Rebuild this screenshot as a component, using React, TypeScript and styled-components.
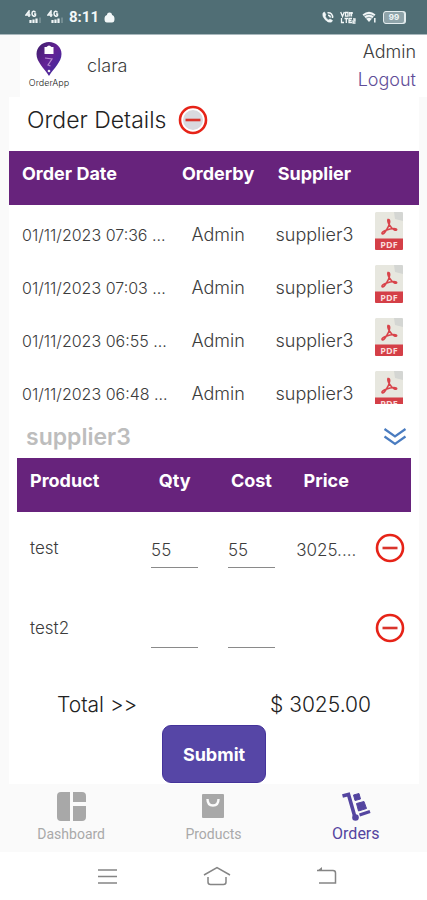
import React, { useState } from "react";
import styled, { createGlobalStyle } from "styled-components";

const GlobalStyle = createGlobalStyle`
  * { box-sizing: border-box; }
  body {
    margin: 0;
    background: #fafafa;
    color: #3c3c3c;
    font-family: Inter, "Open Sans", sans-serif;
    font-size: 17px;
    font-weight: 300;
  }
  button, input { font: inherit; color: inherit; }
`;

const Screen = styled.div`
  display: flex;
  flex-direction: column;
  min-height: 100vh;
`;

const StatusBar = styled.div`
  display: flex;
  align-items: center;
  justify-content: space-between;
  height: 35px;
  padding: 0 22px 0 25px;
  background: #506e75;
  border-bottom: 1px solid #a9b8bd;
  color: #f2f7f8;
`;

const StatusGroup = styled.div<{ $gap: number }>`
  display: flex;
  align-items: center;
  gap: ${(p) => p.$gap}px;
`;

const Clock = styled.span`
  font-family: Roboto, sans-serif;
  font-size: 15px;
  font-weight: 700;
`;

const Header = styled.header`
  display: flex;
  align-items: flex-start;
  height: 62px;
  margin-left: 20px;
  padding: 6px 11px 0 5px;
  background: #fff;
`;

const Logo = styled.div`
  display: flex;
  flex-direction: column;
  align-items: center;
  width: 48px;
  font-size: 9px;
  line-height: 12px;
  color: #222;
`;

const Company = styled.span`
  flex: 1;
  margin: 14px 0 0 14px;
  font-size: 18px;
  line-height: 22px;
`;

const Account = styled.div`
  display: flex;
  flex-direction: column;
  align-items: flex-end;
  font-size: 18px;
  line-height: 28px;
  margin-top: -3px;
`;

const Logout = styled.a`
  color: #5f4d98;
  text-decoration: none;
`;

const Panel = styled.main`
  flex: 1;
  margin: 0 8px 0 9px;
  background: #fff;
`;

const TitleRow = styled.div`
  display: flex;
  align-items: center;
  gap: 12px;
  height: 54px;
  padding: 0 18px 8px;
`;

const Title = styled.h1`
  margin: 0;
  font-size: 23px;
  font-weight: 300;
  color: #222;
`;

const IconButton = styled.button`
  display: inline-flex;
  padding: 0;
  border: 0;
  background: none;
  cursor: pointer;
`;

const OrdersScroll = styled.div`
  max-height: 253px;
  overflow-y: auto;
  scrollbar-width: none;
`;

const Table = styled.table`
  width: 100%;
  table-layout: fixed;
  border-collapse: collapse;
`;

const Col = styled.col<{ $w: number }>`
  width: ${(p) => p.$w}%;
`;

const Th = styled.th<{ $left?: boolean }>`
  position: sticky;
  top: 0;
  z-index: 1;
  height: 54px;
  padding: ${(p) => (p.$left ? "0 0 9px 13px" : "0 0 9px")};
  background: #67237c;
  color: #fff;
  font-size: 18px;
  font-weight: 700;
  text-align: ${(p) => (p.$left ? "left" : "center")};
`;

const Td = styled.td<{ $left?: boolean }>`
  height: 53px;
  padding: ${(p) => (p.$left ? "6px 0 0 13px" : "6px 0 0")};
  font-size: ${(p) => (p.$left ? 16 : 18)}px;
  text-align: ${(p) => (p.$left ? "left" : "center")};
  white-space: nowrap;
`;

const PdfCell = styled(Td)`
  padding: 0 3px 2px 0;
  line-height: 0;
`;

const SupplierRow = styled.div`
  display: flex;
  align-items: center;
  justify-content: space-between;
  height: 54px;
  padding: 12px 12px 0 17px;
`;

const SupplierName = styled.h2`
  margin: 0;
  font-size: 23px;
  font-weight: 600;
  color: #bdbdbd;
`;

const Products = styled.div`
  margin: 0 8px;
`;

const ProductTd = styled(Td)`
  height: 80px;
  padding-top: 0;
  padding-bottom: 9px;
  font-size: 17px;
`;

const NumberTd = styled(ProductTd)`
  padding-bottom: 2px;
`;

const PriceTd = styled(ProductTd)`
  padding-bottom: 4px;
`;

const ActionTd = styled(ProductTd)`
  padding: 0 0 9px 5px;
  line-height: 0;
`;

const NumberInput = styled.input`
  width: 47px;
  height: 34px;
  padding: 0 0 2px;
  border: 0;
  border-bottom: 1px solid #8a8a8a;
  border-radius: 0;
  background: none;
  outline: none;
`;

const TotalRow = styled.div`
  display: flex;
  align-items: center;
  justify-content: space-between;
  height: 53px;
  padding: 11px 48px 0;
  font-size: 21px;
  color: #222;
`;

const Submit = styled.button`
  display: block;
  width: 104px;
  height: 58px;
  margin: 0 auto;
  border: 1px solid #44339a;
  border-radius: 9px;
  background: #5646a6;
  color: #fff;
  font-size: 18px;
  font-weight: 700;
  cursor: pointer;
`;

const TabBar = styled.nav`
  display: grid;
  grid-template-columns: repeat(3, 1fr);
  height: 68px;
  background: #fafafa;
`;

const Tab = styled.a<{ $active?: boolean }>`
  display: flex;
  flex-direction: column;
  align-items: center;
  gap: 2px;
  padding-top: 6px;
  font-family: Roboto, sans-serif;
  font-size: ${(p) => (p.$active ? 16 : 14)}px;
  font-weight: 400;
  line-height: 20px;
  text-decoration: none;
  color: ${(p) => (p.$active ? "#5445a0" : "#a9a9a9")};
`;

const TabIcon = styled.span`
  display: flex;
  align-items: center;
  height: 32px;
`;

const SystemBar = styled.div`
  display: flex;
  align-items: center;
  justify-content: space-between;
  height: 48px;
  padding: 0 90px 0 97px;
  background: #fff;
`;

const SignalIcon = () => (
  <svg width="17" height="14" viewBox="0 0 17 14" fill="none" stroke="currentColor" aria-label="4G signal">
    <path d="M4 7V1L1 5H5.5M10.5 2.5C9.5 .5 7 1 7 3.5S9.5 7 10.5 5.5V4H9" strokeWidth="1.500" />
    <path d="M5.500 13V10M8.500 13V9.500M11.500 13V8.500" strokeWidth="2.200" />
    <path d="M15 13V7.500" strokeWidth="1.500" opacity=".3" />
  </svg>
);

const BagIcon = () => (
  <svg width="11" height="11" viewBox="0 0 11 11" fill="currentColor" aria-hidden="true">
    <path d="M3 3Q3 .5 5.500 .5T8 3Q10.500 3.500 10.500 7T8 10.500H3Q.5 10.500 .5 7T3 3Z" />
  </svg>
);

const CallIcon = () => (
  <svg width="13" height="13" viewBox="0 0 13 13" fill="none" stroke="currentColor" aria-hidden="true">
    <path d="M2 2Q1 5 4 8.500T10.500 11L11.500 9.500 9 8 7.800 9Q5 8 4 5L5 4 3.500 1Z" fill="currentColor" strokeWidth=".6" />
    <path d="M6.500 1.800C10 1.500 12 3.500 11.500 7M7 4.200Q9.300 4.200 9.300 6.500" strokeWidth="1.500" />
  </svg>
);

const VolteIcon = () => (
  <svg width="16" height="13" viewBox="0 0 16 13" fill="none" stroke="currentColor" strokeWidth="1.300" aria-hidden="true">
    <path d="M.7 1 2.500 5.500 4.300 1M5.500 1.500H8V5.200H5.500ZM9.800 1V5.500M9 2H13M11.500 1V5.500M1.500 7V11.500H4M4.500 7.500H8M6.300 7.500V12M12 7.500H9V11.500H12M9 9.500H11.500M13 8H15V10H13V12H15.500" />
  </svg>
);

const WifiIcon = () => (
  <svg width="15" height="12" viewBox="0 0 15 12" aria-hidden="true">
    <path d="M.5 3.500Q7 -2 13.500 3.500L7 11Z" fill="currentColor" />
    <path d="M2 5.200Q7 1.500 12 5.200M4 7.300Q7 5 10 7.300" fill="none" stroke="#506e75" strokeWidth=".7" />
    <path d="M12.800 7V11.500" stroke="currentColor" strokeWidth="1.500" />
  </svg>
);

const BatteryShell = styled.span`
  display: flex;
  align-items: center;
  justify-content: center;
  width: 22px;
  height: 13px;
  border: 1px solid #e4edef;
  border-radius: 3px;
  background: #8ea3a9;
  font-size: 8px;
  font-weight: 700;
  line-height: 10px;
  box-shadow: 1px 0 0 #e4edef;
`;

const LogoPin = () => (
  <svg width="26" height="36" viewBox="0 0 26 36" aria-hidden="true">
    <defs>
      <linearGradient id="pin" x1="0" y1="0" x2="1" y2="1">
        <stop offset="0" stopColor="#3d1e69" />
        <stop offset=".5" stopColor="#632296" />
        <stop offset="1" stopColor="#362da0" />
      </linearGradient>
    </defs>
    <path d="M13 1C6 1 .5 6 .5 13C.5 21 8 27 13 35C18 27 25.500 21 25.500 13C25.500 6 20 1 13 1Z" fill="url(#pin)" />
    <path d="M8.500 6H10.500Q13 3 15.500 6H17.500V13H8.500Z" fill="#fff" />
    <path d="M9 17L16 18 12 24 14.500 25" fill="none" stroke="#b58bd0" strokeWidth="1.200" />
    <circle cx="13" cy="30" r="1.300" fill="#eee" />
  </svg>
);

const MinusIcon = ({ shaded }: { shaded?: boolean }) => (
  <svg width="30" height="30" viewBox="0 0 30 30" fill="none" aria-hidden="true">
    {shaded && <circle cx="15" cy="15" r="10" fill="#d9d9df" />}
    <circle cx="15" cy="15" r="13" stroke="#e62318" strokeWidth="2.600" />
    <path d="M7.500 15H22.500" stroke="#d9342c" strokeWidth="2.600" />
  </svg>
);

const PdfGlyph = styled.svg`
  font: 700 9px "Open Sans", sans-serif;
`;

const PdfIcon = () => (
  <PdfGlyph width="28" height="38" viewBox="0 0 28 38" aria-hidden="true">
    <path d="M1 0H20L28 8V27H0V1Z" fill="#e7e7df" />
    <path d="M19 0H27Q28 0 28 1V9L20 7Z" fill="#d4d6d3" />
    <path d="M0 26.500H28V37Q28 38 27 38H1Q0 38 0 37Z" fill="#d43f47" />
    <path d="M13 7.500C16 7 14.500 13 12 17C10 21 7.500 23 7 21.500C6.500 19.500 14 16.500 19 16.500C23 16.500 22 19 19.500 18C16 16.500 12 10 13 7.500Z" fill="none" stroke="#d8434a" strokeWidth="1.600" />
    <text x="14" y="35.500" textAnchor="middle" fill="#f9dcdc">PDF</text>
  </PdfGlyph>
);

const ChevronsIcon = () => (
  <svg width="24" height="20" viewBox="0 0 24 20" fill="none" stroke="#4a7cc0" strokeWidth="2.200" aria-hidden="true">
    <path d="M1.500 2L12 9.500 22.500 2M1.500 9.500L12 17 22.500 9.500" />
  </svg>
);

const DashboardIcon = () => (
  <svg width="29" height="29" viewBox="0 0 29 29" fill="#a8a8a8" aria-hidden="true">
    <path d="M4 0H13V29H4Q0 29 0 25V4Q0 0 4 0ZM16 0H25Q29 0 29 4V10H16ZM16 14H29V25Q29 29 25 29H16Z" />
  </svg>
);

const ProductsIcon = () => (
  <svg width="22" height="24" viewBox="0 0 22 24" fill="none" aria-hidden="true">
    <rect width="22" height="24" rx="1" fill="#a8a8a8" />
    <path d="M5.500 5Q5.500 11.500 11 11.500T16.500 5" stroke="#fafafa" strokeWidth="2.400" />
  </svg>
);

const OrdersIcon = () => (
  <svg width="30" height="32" viewBox="0 0 30 32" fill="#5445a0" aria-hidden="true">
    <path d="M1.500 6L7.500 4.500 13.500 25.500" fill="none" stroke="#5445a0" strokeWidth="3.600" />
    <path d="M18.500 25L29 21.500" stroke="#5445a0" strokeWidth="3.200" />
    <circle cx="14.500" cy="27.500" r="3.300" />
    <path d="M12.500 5L18 3.500 19.500 9 14 10.500ZM15.500 13.500L23 11.500 25.500 18.500 17.500 21Z" stroke="#5445a0" strokeLinejoin="round" />
  </svg>
);

const MenuKey = () => (
  <svg width="21" height="17" viewBox="0 0 21 17" stroke="#858585" strokeWidth="1.500" aria-hidden="true">
    <path d="M1 2H20M1 8.500H20M1 15H20" />
  </svg>
);

const HomeKey = () => (
  <svg width="28" height="20" viewBox="0 0 28 20" fill="none" stroke="#858585" strokeWidth="1.500" aria-hidden="true">
    <path d="M1 9L14 1.500 27 9M5 11V16Q5 18.500 7.500 18.500H20.500Q23 18.500 23 16V11" />
  </svg>
);

const BackKey = () => (
  <svg width="21" height="18" viewBox="0 0 21 18" fill="none" stroke="#858585" strokeWidth="1.500" aria-hidden="true">
    <path d="M1 3.500H17Q19.500 3.500 19.500 6V16H3" />
    <path d="M6 0V4H1Z" fill="#858585" stroke="none" />
  </svg>
);

const orders = ["07:36", "07:03", "06:55", "06:48"];

const initialProducts = [
  { name: "test", qty: "55", cost: "55", price: "3025...." },
  { name: "test2", qty: "", cost: "", price: "" },
];

export default function App() {
  const [products, setProducts] = useState(initialProducts);
  const update = (index: number, key: "qty" | "cost", value: string) =>
    setProducts(products.map((p, i) => (i === index ? { ...p, [key]: value } : p)));

  return (
    <Screen>
      <GlobalStyle />
      <StatusBar>
        <StatusGroup $gap={5}>
          <SignalIcon />
          <SignalIcon />
          <Clock>8:11</Clock>
          <BagIcon />
        </StatusGroup>
        <StatusGroup $gap={6}>
          <CallIcon />
          <VolteIcon />
          <WifiIcon />
          <BatteryShell>99</BatteryShell>
        </StatusGroup>
      </StatusBar>

      <Header>
        <Logo>
          <LogoPin />
          OrderApp
        </Logo>
        <Company>clara</Company>
        <Account>
          <span>Admin</span>
          <Logout href="#logout">Logout</Logout>
        </Account>
      </Header>

      <Panel>
        <TitleRow>
          <Title>Order Details</Title>
          <IconButton aria-label="Collapse order details">
            <MinusIcon shaded />
          </IconButton>
        </TitleRow>

        <OrdersScroll>
          <Table>
            <colgroup>
              <Col $w={39} />
              <Col $w={24} />
              <Col $w={23} />
              <Col $w={14} />
            </colgroup>
            <thead>
              <tr>
                <Th $left>Order Date</Th>
                <Th>Orderby</Th>
                <Th>Supplier</Th>
                <Th aria-label="Document" />
              </tr>
            </thead>
            <tbody>
              {orders.map((time) => (
                <tr key={time}>
                  <Td $left>01/11/2023 {time} ...</Td>
                  <Td>Admin</Td>
                  <Td>supplier3</Td>
                  <PdfCell>
                    <IconButton aria-label={`Open PDF for ${time}`}>
                      <PdfIcon />
                    </IconButton>
                  </PdfCell>
                </tr>
              ))}
            </tbody>
          </Table>
        </OrdersScroll>

        <SupplierRow>
          <SupplierName>supplier3</SupplierName>
          <IconButton aria-label="Expand supplier">
            <ChevronsIcon />
          </IconButton>
        </SupplierRow>

        <Products>
          <Table>
            <colgroup>
              <Col $w={30} />
              <Col $w={20} />
              <Col $w={19} />
              <Col $w={19} />
              <Col $w={12} />
            </colgroup>
            <thead>
              <tr>
                <Th $left>Product</Th>
                <Th>Qty</Th>
                <Th>Cost</Th>
                <Th>Price</Th>
                <Th aria-label="Remove" />
              </tr>
            </thead>
            <tbody>
              {products.map((p, i) => (
                <tr key={p.name}>
                  <ProductTd $left>{p.name}</ProductTd>
                  <NumberTd>
                    <NumberInput aria-label={`${p.name} quantity`} value={p.qty} onChange={(e) => update(i, "qty", e.target.value)} />
                  </NumberTd>
                  <NumberTd>
                    <NumberInput aria-label={`${p.name} cost`} value={p.cost} onChange={(e) => update(i, "cost", e.target.value)} />
                  </NumberTd>
                  <PriceTd>{p.price}</PriceTd>
                  <ActionTd>
                    <IconButton aria-label={`Remove ${p.name}`}>
                      <MinusIcon />
                    </IconButton>
                  </ActionTd>
                </tr>
              ))}
            </tbody>
          </Table>
        </Products>

        <TotalRow>
          <span>Total &gt;&gt;</span>
          <span>$ 3025.00</span>
        </TotalRow>
        <Submit>Submit</Submit>
      </Panel>

      <TabBar>
        <Tab href="#dashboard">
          <TabIcon><DashboardIcon /></TabIcon>
          Dashboard
        </Tab>
        <Tab href="#products">
          <TabIcon><ProductsIcon /></TabIcon>
          Products
        </Tab>
        <Tab href="#orders" $active>
          <TabIcon><OrdersIcon /></TabIcon>
          Orders
        </Tab>
      </TabBar>

      <SystemBar>
        <IconButton aria-label="Recent apps"><MenuKey /></IconButton>
        <IconButton aria-label="Home"><HomeKey /></IconButton>
        <IconButton aria-label="Back"><BackKey /></IconButton>
      </SystemBar>
    </Screen>
  );
}
